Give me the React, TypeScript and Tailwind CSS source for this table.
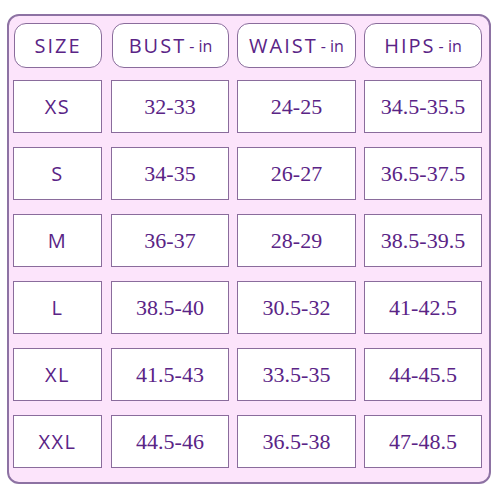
import React from 'react';

const rows = [
  ['XS', '32-33', '24-25', '34.5-35.5'],
  ['S', '34-35', '26-27', '36.5-37.5'],
  ['M', '36-37', '28-29', '38.5-39.5'],
  ['L', '38.5-40', '30.5-32', '41-42.5'],
  ['XL', '41.5-43', '33.5-35', '44-45.5'],
  ['XXL', '44.5-46', '36.5-38', '47-48.5'],
];

const headers = [
  { label: 'SIZE', unit: '' },
  { label: 'BUST', unit: '- in' },
  { label: 'WAIST', unit: '- in' },
  { label: 'HIPS', unit: '- in' },
];

const sans = { fontFamily: '"Open Sans", "Noto Sans", sans-serif' };
const serif = { fontFamily: '"Liberation Serif", "DejaVu Serif", serif' };

const App = () => {
  return (
    <div className="w-[500px] h-[500px] bg-white pt-[14px] pl-[7px]">
      <div className="w-[484px] h-[470px] rounded-[12px] border-2 border-[#8d72a3] bg-[#fce4fb] pl-[4px] pt-[7px]">
        {/* header row */}
        <div className="grid grid-cols-[89px_119px_119px_118px] gap-x-[8px] h-[45px]">
          {headers.map((h, i) => (
            <div
              key={h.label}
              className={`flex items-center justify-center rounded-[12px] border-[1.5px] border-[#8a6c9c] bg-white text-[#5a2486] ${i === 0 ? 'ml-[1px]' : ''} ${i === 1 ? 'ml-[2px]' : ''}`}
              style={sans}
            >
              <span className="text-[20px] font-medium tracking-[2px] leading-none">{h.label}</span>
              {h.unit && <span className="text-[16px] font-medium leading-none ml-[3px]">{h.unit}</span>}
            </div>
          ))}
        </div>

        {/* data rows */}
        <div className="mt-[12px] flex flex-col gap-y-[14px]">
          {rows.map((r) => (
            <div key={r[0]} className="grid grid-cols-[89px_119px_119px_118px] gap-x-[8px] h-[53px]">
              {r.map((v, i) => (
                <div
                  key={i}
                  className={`flex items-center justify-center border-[1.5px] border-[#8a6c9c] bg-white text-[#5a2486] ${i === 1 ? 'ml-[1px]' : ''}`}
                >
                  {i === 0 ? (
                    <span className="text-[20px] font-medium tracking-[1.5px] leading-none" style={sans}>{v}</span>
                  ) : (
                    <span className="text-[22px] leading-none" style={serif}>{v}</span>
                  )}
                </div>
              ))}
            </div>
          ))}
        </div>
      </div>
    </div>
  );
};

export default App;
